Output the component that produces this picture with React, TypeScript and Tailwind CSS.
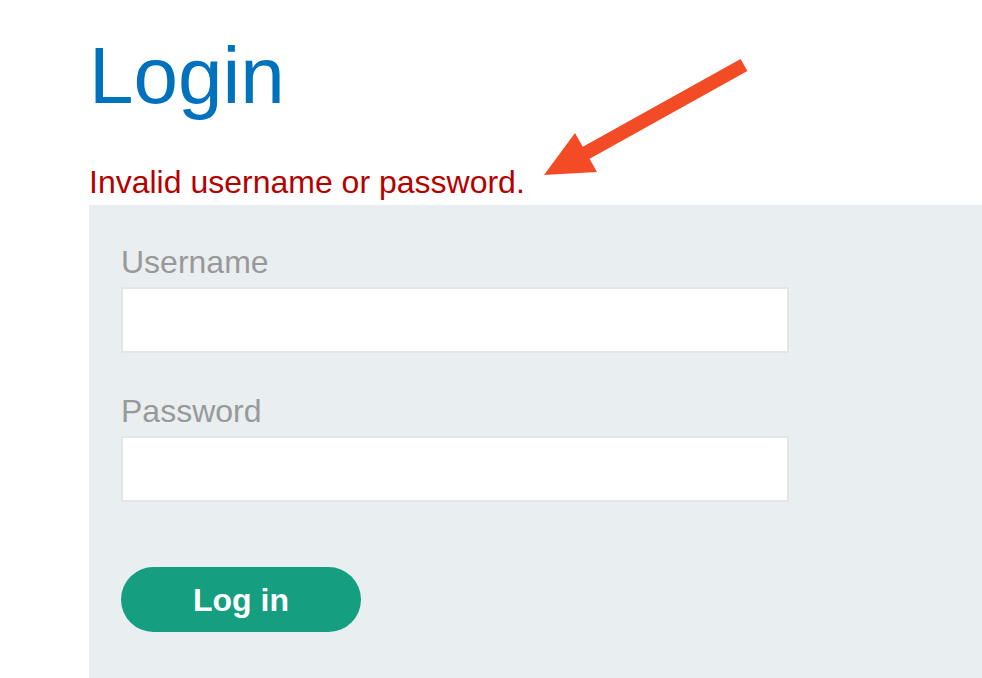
import React from "react";

export default function App() {
  return (
    <div
      className="relative w-[982px] h-[678px] overflow-hidden bg-white"
      style={{ fontFamily: '"Liberation Sans", Arial, sans-serif' }}
    >
      <div className="pl-[89px] pt-[36px] flex flex-col">
        <h1 className="text-[80px] leading-[80px] text-[#0071bc] font-normal">Login</h1>
        <p className="mt-[50px] text-[32px] leading-[32px] text-[#b50000]">
          Invalid username or password.
        </p>
        <div className="mt-[7px] bg-[#e9eef1] h-[600px] pl-[32px] pt-[41px] flex flex-col">
          <label className="text-[32px] leading-[32px] text-[#999999]">Username</label>
          <input
            type="text"
            className="mt-[9px] w-[668px] h-[66px] bg-white border-2 border-[#e3e5e6] outline-none"
          />
          <label className="mt-[42px] text-[32px] leading-[32px] text-[#999999]">Password</label>
          <input
            type="password"
            className="mt-[9px] w-[668px] h-[66px] bg-white border-2 border-[#e3e5e6] outline-none"
          />
          <button className="mt-[65px] w-[240px] h-[65px] rounded-full bg-[#159e80] text-white text-[32px] font-bold leading-[32px] flex items-center justify-center">
            Log in
          </button>
        </div>
      </div>
      <svg
        className="absolute left-0 top-0 pointer-events-none"
        width="982"
        height="678"
        viewBox="0 0 982 678"
      >
        <line x1="584" y1="154" x2="744" y2="65" stroke="#f44b27" strokeWidth="14" />
        <polygon points="544,175 575,133 597,172" fill="#f44b27" />
      </svg>
    </div>
  );
}
